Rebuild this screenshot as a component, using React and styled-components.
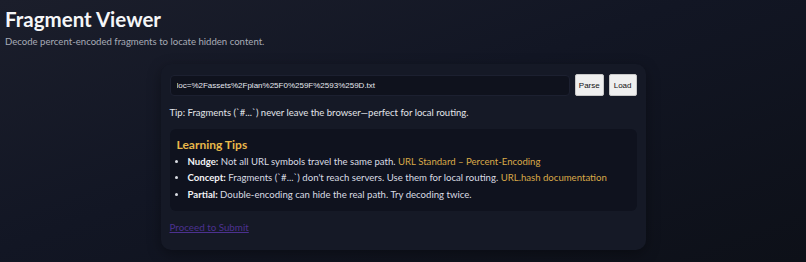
import * as React from "react";
import styled, { createGlobalStyle } from "styled-components";

const GlobalStyle = createGlobalStyle`
  html, body {
    margin: 0;
    padding: 0;
  }
  body {
    min-height: 100vh;
    background: linear-gradient(160deg, #1b1e2b 0%, #121624 45%, #0d1018 100%);
    font-family: Lato, "Open Sans", sans-serif;
    color: #e5e7eb;
  }
`;

const Page = styled.div`
  padding: 6px 5px 10px;
`;

const Title = styled.h1`
  margin: 0;
  font-size: 20.5px;
  line-height: 26px;
  font-weight: 700;
  color: #f5f6f8;
`;

const Subtitle = styled.p`
  margin: 3px 0 0;
  font-size: 9.6px;
  line-height: 14px;
  color: #a7abb6;
`;

const Card = styled.div`
  width: 485px;
  box-sizing: border-box;
  margin: 15px auto 0;
  padding: 10px 9px 16px;
  background: #151926;
  border-radius: 10px;
  box-shadow: 0 4px 14px rgba(0, 0, 0, 0.35);
`;

const Row = styled.div`
  display: flex;
  align-items: center;
  gap: 5px;
`;

const UrlInput = styled.input`
  flex: 1;
  height: 21px;
  box-sizing: border-box;
  padding: 0 6px;
  background: #0f121d;
  border: 1px solid #1c2030;
  border-radius: 4px;
  color: #e6e8ee;
  font-family: "Liberation Sans", Arial, sans-serif;
  font-size: 8px;
  outline: none;
`;

const Button = styled.button`
  height: 22px;
  padding: 0 ${(p) => (p.$wide ? "3px" : "4px")};
  background: #efefef;
  border: 1px solid #c8c8c8;
  border-radius: 2px;
  color: #111;
  font-family: "Liberation Sans", Arial, sans-serif;
  font-size: 8px;
`;

const Tip = styled.p`
  margin: 10px 0 0;
  font-size: 9.5px;
  line-height: 14px;
  color: #e3e5ea;
`;

const TipsBox = styled.div`
  margin-top: 9px;
  padding: 8px 7px 8px;
  background: #0f121e;
  border-radius: 6px;
`;

const TipsHeading = styled.h3`
  margin: 0 0 2px;
  font-size: 12px;
  line-height: 15px;
  font-weight: 700;
  color: #e8b84a;
`;

const TipList = styled.ul`
  margin: 0;
  padding-left: 11px;
  list-style: disc;
`;

const TipItem = styled.li`
  font-size: 9.6px;
  line-height: 16.4px;
  color: #d9dce3;

  b {
    color: #f2f3f6;
    font-weight: 700;
  }
`;

const DocLink = styled.a`
  color: #d9a948;
  text-decoration: none;
`;

const SubmitLink = styled.a`
  display: inline-block;
  margin-top: 9px;
  font-size: 9.8px;
  line-height: 14px;
  color: #4c3190;
  text-decoration: underline;
`;

const tips = [
  {
    label: "Nudge:",
    text: "Not all URL symbols travel the same path.",
    link: "URL Standard – Percent-Encoding",
  },
  {
    label: "Concept:",
    text: "Fragments (`#...`) don't reach servers. Use them for local routing.",
    link: "URL.hash documentation",
  },
  {
    label: "Partial:",
    text: "Double-encoding can hide the real path. Try decoding twice.",
  },
];

export default function App() {
  const [value, setValue] = React.useState(
    "loc=%2Fassets%2Fplan%25F0%259F%2593%259D.txt"
  );
  return (
    <Page>
      <GlobalStyle />
      <Title>Fragment Viewer</Title>
      <Subtitle>Decode percent-encoded fragments to locate hidden content.</Subtitle>
      <Card>
        <Row>
          <UrlInput value={value} onChange={(e) => setValue(e.target.value)} />
          <Button $wide>Parse</Button>
          <Button>Load</Button>
        </Row>
        <Tip>Tip: Fragments (`#...`) never leave the browser—perfect for local routing.</Tip>
        <TipsBox>
          <TipsHeading>Learning Tips</TipsHeading>
          <TipList>
            {tips.map((t) => (
              <TipItem key={t.label}>
                <b>{t.label}</b> {t.text}
                {t.link && (
                  <>
                    {" "}
                    <DocLink href="#">{t.link}</DocLink>
                  </>
                )}
              </TipItem>
            ))}
          </TipList>
        </TipsBox>
        <SubmitLink href="#">Proceed to Submit</SubmitLink>
      </Card>
    </Page>
  );
}
